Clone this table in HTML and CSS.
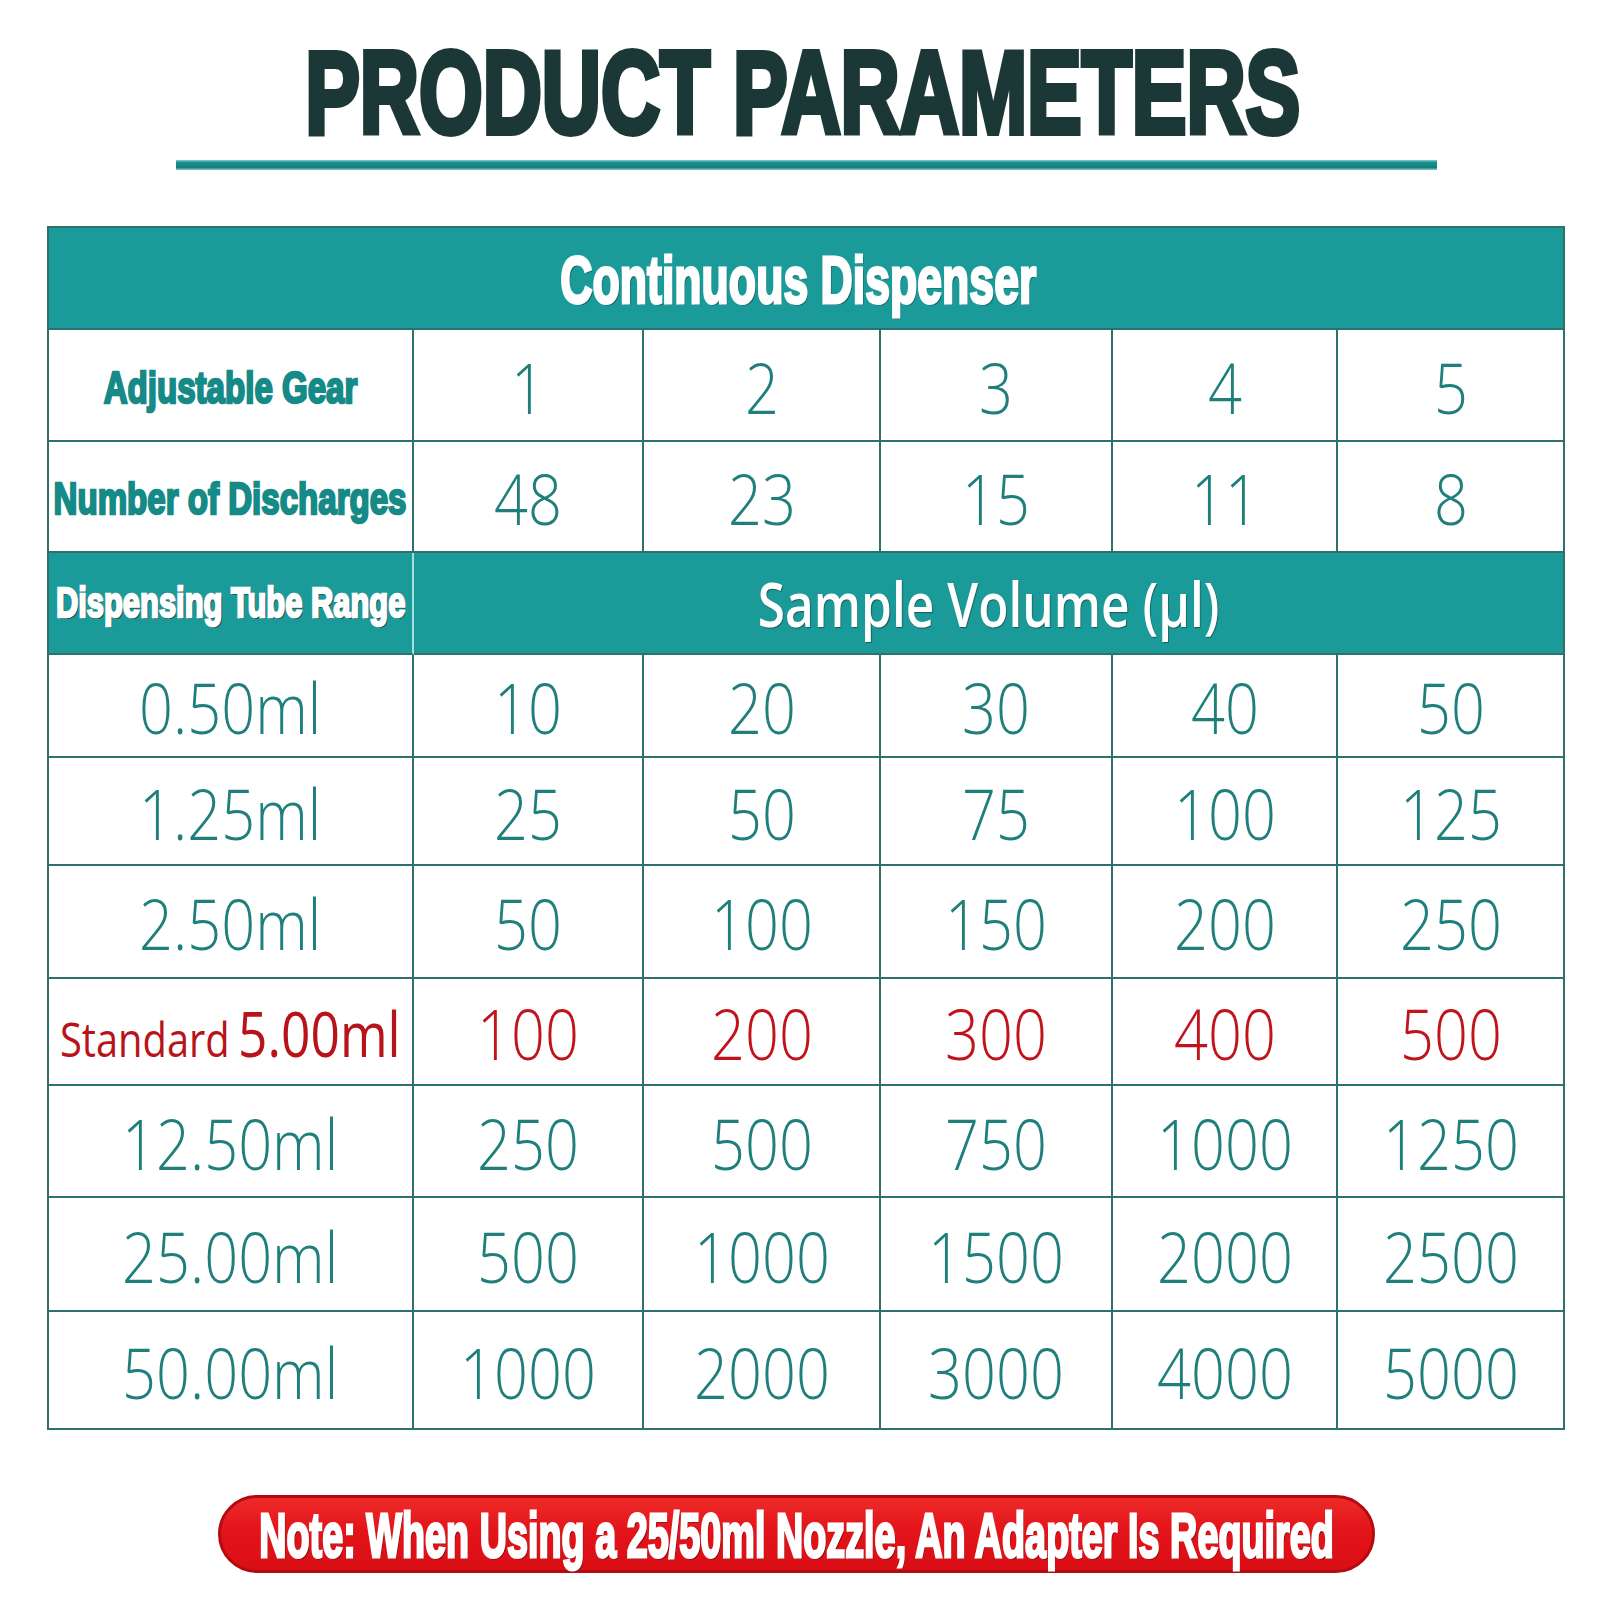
FILE: index.html
```html
<!DOCTYPE html>
<html lang="en">
<head>
<meta charset="utf-8">
<title>Product Parameters</title>
<link rel="stylesheet" href="styles.css">
</head>
<body>
<main class="page">
  <h1 class="title"><span class="title-text">PRODUCT PARAMETERS</span></h1>
  <div class="title-bar"></div>

  <div class="table">
    <div class="cell head span-all"><span class="hd-text">Continuous Dispenser</span></div>

    <div class="cell"><span class="lbl">Adjustable Gear</span></div>
    <div class="cell"><span class="n">1</span></div>
    <div class="cell"><span class="n">2</span></div>
    <div class="cell"><span class="n">3</span></div>
    <div class="cell"><span class="n">4</span></div>
    <div class="cell"><span class="n">5</span></div>

    <div class="cell"><span class="lbl">Number of Discharges</span></div>
    <div class="cell"><span class="n">48</span></div>
    <div class="cell"><span class="n">23</span></div>
    <div class="cell"><span class="n">15</span></div>
    <div class="cell"><span class="n">11</span></div>
    <div class="cell"><span class="n">8</span></div>

    <div class="cell head head-first"><span class="lbl lbl-white">Dispensing Tube Range</span></div>
    <div class="cell head span-five"><span class="sv">Sample Volume (µl)</span></div>

    <div class="cell"><span class="n">0.50ml</span></div>
    <div class="cell"><span class="n">10</span></div>
    <div class="cell"><span class="n">20</span></div>
    <div class="cell"><span class="n">30</span></div>
    <div class="cell"><span class="n">40</span></div>
    <div class="cell"><span class="n">50</span></div>

    <div class="cell"><span class="n">1.25ml</span></div>
    <div class="cell"><span class="n">25</span></div>
    <div class="cell"><span class="n">50</span></div>
    <div class="cell"><span class="n">75</span></div>
    <div class="cell"><span class="n">100</span></div>
    <div class="cell"><span class="n">125</span></div>

    <div class="cell"><span class="n">2.50ml</span></div>
    <div class="cell"><span class="n">50</span></div>
    <div class="cell"><span class="n">100</span></div>
    <div class="cell"><span class="n">150</span></div>
    <div class="cell"><span class="n">200</span></div>
    <div class="cell"><span class="n">250</span></div>

    <div class="cell"><span class="std"><span class="std-word">Standard</span> <span class="std-size">5.00ml</span></span></div>
    <div class="cell"><span class="n red">100</span></div>
    <div class="cell"><span class="n red">200</span></div>
    <div class="cell"><span class="n red">300</span></div>
    <div class="cell"><span class="n red">400</span></div>
    <div class="cell"><span class="n red">500</span></div>

    <div class="cell"><span class="n">12.50ml</span></div>
    <div class="cell"><span class="n">250</span></div>
    <div class="cell"><span class="n">500</span></div>
    <div class="cell"><span class="n">750</span></div>
    <div class="cell"><span class="n">1000</span></div>
    <div class="cell"><span class="n">1250</span></div>

    <div class="cell"><span class="n">25.00ml</span></div>
    <div class="cell"><span class="n">500</span></div>
    <div class="cell"><span class="n">1000</span></div>
    <div class="cell"><span class="n">1500</span></div>
    <div class="cell"><span class="n">2000</span></div>
    <div class="cell"><span class="n">2500</span></div>

    <div class="cell"><span class="n">50.00ml</span></div>
    <div class="cell"><span class="n">1000</span></div>
    <div class="cell"><span class="n">2000</span></div>
    <div class="cell"><span class="n">3000</span></div>
    <div class="cell"><span class="n">4000</span></div>
    <div class="cell"><span class="n">5000</span></div>
  </div>

  <div class="note"><span class="note-text">Note: When Using a 25/50ml Nozzle, An Adapter Is Required</span></div>
</main>
</body>
</html>
```

FILE: styles.css
```css
* { box-sizing: border-box; }

html, body {
  margin: 0;
  padding: 0;
  background: #ffffff;
}

.page {
  width: 1600px;
  height: 1600px;
  display: flex;
  flex-direction: column;
  align-items: flex-start;
  overflow: hidden;
}

/* ---------- Title ---------- */
.title {
  margin: 34px 0 0 0;
  width: 100%;
  height: 117px;
  display: flex;
  justify-content: center;
  font-family: "Liberation Sans", Arial, sans-serif;
  font-weight: 700;
  font-size: 117px;
  line-height: 117px;
  color: #1c3836;
}

.title-text {
  display: inline-block;
  flex-shrink: 0;
  white-space: nowrap;
  transform: scaleX(0.70);
  -webkit-text-stroke: 6px #1c3836;
  margin-left: 6px;
}

.title-bar {
  margin: 9px 0 0 176px;
  width: 1261px;
  height: 10px;
  background: linear-gradient(to bottom, #7fd0cf 0%, #1c8f8c 25%, #167f7c 75%, #7fd0cf 100%);
}

/* ---------- Table ---------- */
.table {
  margin: 56px 0 0 47px;
  display: grid;
  grid-template-columns: 365px 230px 237px 232px 225px 227px;
  grid-template-rows: 102px 112px 111px 102px 103px 108px 113px 107px 112px 114px 118px;
  border-left: 2px solid #2d706c;
  border-top: 2px solid #2d706c;
}

.cell {
  display: flex;
  align-items: center;
  justify-content: center;
  border-right: 2px solid #2d706c;
  border-bottom: 2px solid #2d706c;
  background: #ffffff;
  overflow: visible;
}

.head {
  background: #1a9a99;
}

.span-all { grid-column: 1 / span 6; }
.span-five { grid-column: 2 / span 5; }

.head-first {
  border-right-color: #a6dedb;
}

.hd-text {
  display: inline-block;
  flex-shrink: 0;
  white-space: nowrap;
  font-family: "Liberation Sans", Arial, sans-serif;
  font-weight: 700;
  font-size: 67px;
  line-height: 1;
  color: #ffffff;
  transform: scaleX(0.666);
  -webkit-text-stroke: 3px #ffffff;
  text-shadow: 2px 2px 0 #14605e, 1px 1px 0 #14605e;
  margin-top: 2px;
  margin-right: 16px;
}

.lbl {
  display: inline-block;
  flex-shrink: 0;
  white-space: nowrap;
  font-family: "Liberation Sans", Arial, sans-serif;
  font-weight: 700;
  font-size: 45px;
  line-height: 1;
  color: #168a87;
  transform: scaleX(0.735);
  -webkit-text-stroke: 2.5px #168a87;
  margin-top: 4px;
}

.lbl-white {
  font-size: 42px;
  color: #ffffff;
  -webkit-text-stroke: 2.5px #ffffff;
  text-shadow: 1px 1px 0 #1b4f4d, -1px 1px 0 #1b4f4d, 1px -1px 0 #1b4f4d, -1px -1px 0 #1b4f4d, 2px 2px 0 #1b4f4d;
  margin-top: 0;
}

.sv {
  display: inline-block;
  flex-shrink: 0;
  white-space: nowrap;
  font-family: "Open Sans", "DejaVu Sans", sans-serif;
  font-weight: 600;
  font-size: 62px;
  line-height: 1;
  color: #ffffff;
  transform: scaleX(0.80);
  text-shadow: 1px 1px 1px #1a5d5b;
}

.n {
  display: inline-block;
  flex-shrink: 0;
  white-space: nowrap;
  font-family: "Open Sans", "DejaVu Sans", sans-serif;
  font-weight: 350;
  font-size: 70px;
  line-height: 1;
  color: #1f7f7b;
  transform: scaleX(0.85);
  margin-top: 3px;
}

.n.red {
  color: #c1131b;
}

.std {
  display: inline-block;
  flex-shrink: 0;
  white-space: nowrap;
  font-family: "Open Sans", "DejaVu Sans", sans-serif;
  line-height: 1;
  color: #b8121b;
  transform: scaleX(0.83);
  margin-top: 3px;
}

.std-word {
  font-size: 48px;
  font-weight: 400;
  margin-right: 6px;
}

.std-size {
  font-size: 62px;
  font-weight: 500;
}

/* ---------- Note ---------- */
.note {
  margin: 65px 0 0 218px;
  width: 1157px;
  height: 78px;
  border-radius: 39px;
  background: linear-gradient(to bottom, #ee2a2a 0%, #e3141a 45%, #d90f15 100%);
  border: 3px solid #b30b10;
  display: flex;
  align-items: center;
  justify-content: center;
}

.note-text {
  display: inline-block;
  flex-shrink: 0;
  white-space: nowrap;
  font-family: "Liberation Sans", Arial, sans-serif;
  font-weight: 700;
  font-size: 63px;
  line-height: 1;
  color: #ffffff;
  transform: scaleX(0.6);
  -webkit-text-stroke: 3px #ffffff;
  text-shadow: 2px 2px 0 #7a0508, 1px 1px 0 #7a0508;
  margin-top: 2px;
}
```
